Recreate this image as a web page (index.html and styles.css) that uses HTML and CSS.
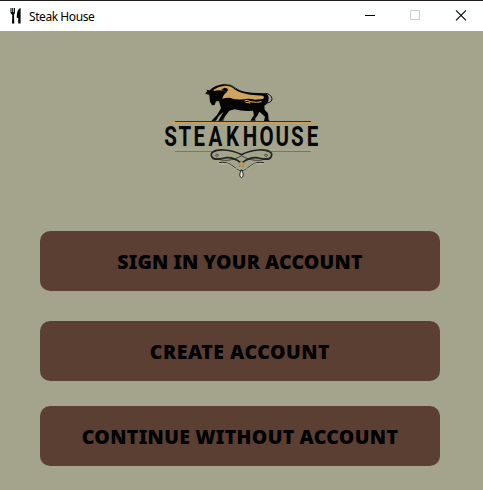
FILE: index.html
```
<!DOCTYPE html>
<html lang="en">
<head>
<meta charset="utf-8">
<title>Steak House</title>
<link rel="stylesheet" href="styles.css">
</head>
<body>
<header class="titlebar">
  <svg class="app-icon" width="12" height="16" viewBox="0 0 12 16"><path d="M.5 0h1v4h.7V0h1v4h.7V0h1v5L4 7l.3 8.5H2L2.3 7 .5 5z"/><path d="M10.6 0v15.5H8.2V10H6.8C6.8 5 7.5 1 10.6 0z"/></svg>
  <span class="title">Steak House</span>
  <div class="controls">
    <svg width="46" height="30" viewBox="0 0 46 30"><path d="M19 14.5h10" stroke="#000"/></svg>
    <svg width="46" height="30" viewBox="0 0 46 30"><path d="M18.5 9.5h9v9h-9z" fill="none" stroke="#ccc"/></svg>
    <svg width="46" height="30" viewBox="0 0 46 30"><path d="M18 9.3l10 10M28 9.3l-10 10" stroke="#000" stroke-width="1.1"/></svg>
  </div>
</header>
<main class="content">
  <svg class="logo" width="165" height="106" viewBox="160 78 165 106">
    <g transform="translate(195 78) scale(.33333)">
      <path d="M30 47L37 40 34 35 43 37Q57 22 80 18Q107 15 124 31Q140 42 170 44L211 46Q221 49 221 62Q220 77 208 83L209 95 219 106 221 125 224 129H207L210 116 193 101 187 113 180 122 182 128H166L177 111 174 98Q146 102 119 94L103 98 91 114 85 128 70 129 84 103 71 115 63 128 49 129 66 111 78 91 72 70 63 70 59 81 51 82 45 71 43 52Z" fill="#050505"/>
      <path d="M211 46Q226 47 231 61Q232 72 217 75" fill="none" stroke="#111" stroke-width="3"/>
      <path d="M56 35Q70 25 90 23Q110 23 118 34Q138 47 165 50L203 53Q211 58 203 63L180 65Q160 60 146 64Q125 67 104 59Q90 59 82 62Q84 50 96 42Q78 33 56 39Z" fill="#cfa45e"/>
      <path d="M88 29Q97 29 100 36L94 42Q84 37 78 36Z" fill="#080808"/>
      <path d="M148 69Q156 64 166 71L185 73 200 71M152 73L166 75" fill="none" stroke="#dfb46f" stroke-width="3"/>
      <path d="M43 36Q60 20 85 18Q108 17 123 32" fill="none" stroke="#ddd3b7" stroke-width="1.2"/>
      <path d="M31 48L43 49M84 104L70 122M93 113L83 127" fill="none" stroke="#c6ae7c" stroke-width="1.2"/>
    </g>
    <path d="M175 121.5h136" stroke="#303026"/>
    <path d="M170 122.5h144" stroke="#cba261" stroke-width="1.2"/>
    <text class="wordmark" transform="translate(0 146.4) scale(.76 1)" x="216 235 254.5 274.5 297.5 319.5 341.5 362.5 383 403.5" y="0">STEAKHOUSE</text>
    <path d="M170 149.5h45M269 149.5h45" stroke="#cba261" stroke-width="1.2"/>
    <path d="M175 151.5h39M271 151.5h40" stroke="#77776a"/>
    <g transform="translate(155 115) scale(.33333)">
      <g id="scroll" fill="none" stroke="#242420">
        <path d="M260 119Q236 107 208 105C176 103 164 114 171 126C177 137 195 132 214 128Q235 126 256 142" stroke-width="5"/>
        <path d="M260 122C236 137 200 141 184 129" stroke-width="2.4"/>
        <path d="M191 120Q184 113 181 122Q186 127 191 122" stroke-width="2"/>
        <path d="M192 143Q215 139 230 151T259 168" stroke-width="3"/>
        <path d="M191 145Q207 148 219 145Q238 163 256 164" stroke="#ddd8c8" stroke-width="1.5"/>
      </g>
      <use href="#scroll" transform="translate(519 0) scale(-1 1)"/>
      <path d="M259.5 137l2.5 6h7l-5 5 2 7-6.5-4-6.5 4 2-7-5-5h7z" fill="#cf9f52" stroke="#725c38"/>
      <path d="M259.5 164Q249 184 259.5 188Q270 184 259.5 164z" fill="#eeeae0" stroke="#222" stroke-width="3"/>
    </g>
  </svg>
  <button class="action sign-in"><span>SIGN IN YOUR ACCOUNT</span></button>
  <button class="action create"><span>CREATE ACCOUNT</span></button>
  <button class="action guest"><span>CONTINUE WITHOUT ACCOUNT</span></button>
</main>
</body>
</html>
```
FILE: styles.css
```
* { box-sizing: border-box; }
body {
  margin: 0;
  height: 490px;
  overflow: hidden;
  background: #a4a48c;
  font-family: "Noto Sans", sans-serif;
}
.titlebar {
  display: flex;
  align-items: center;
  height: 31px;
  border-top: 1px solid #231c1e;
  background: #fff;
  padding-left: 10px;
}
.app-icon { margin-right: 7px; }
.title { font-size: 12px; letter-spacing: -.43px; color: #000; }
.controls { display: flex; margin-left: auto; height: 30px; margin-right: -1px; }
.content {
  display: flex;
  flex-direction: column;
  padding: 47px 43px 0 40px;
}
.logo { margin-left: 120px; flex: none; }
.wordmark { font: 700 27px Roboto, sans-serif; fill: #080808; }
.action {
  width: 400px;
  height: 60px;
  flex: none;
  padding: 0;
  border: 0;
  border-radius: 10px;
  background: #5b3f33;
  color: #000;
  font: 900 19.5px "Noto Sans", sans-serif;
  white-space: nowrap;
}
.action span { display: inline-block; }
.sign-in { margin-top: 47px; letter-spacing: .2px; word-spacing: -.5px; }
.create { margin-top: 30px; letter-spacing: .52px; }
.guest { margin-top: 25px; letter-spacing: .33px; word-spacing: -.5px; }
```
